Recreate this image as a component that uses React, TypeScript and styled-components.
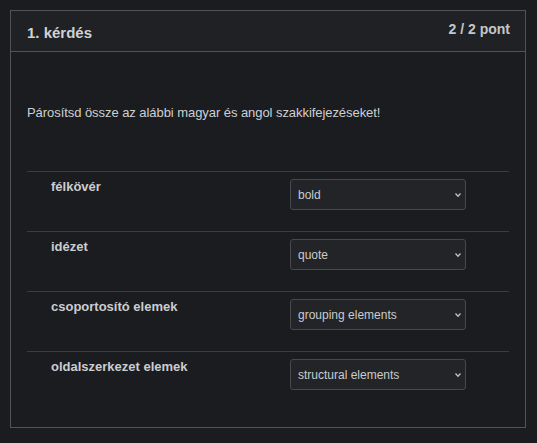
import React from "react";
import styled, { createGlobalStyle } from "styled-components";

const Global = createGlobalStyle`
  html, body { margin: 0; padding: 0; background: #1b1c1f; }
  body { font-family: "Liberation Sans", Arial, sans-serif; color: #cdcfd2; }
`;

const Page = styled.div`
  padding: 10px 11px 14px 10px;
`;

const Card = styled.section`
  border: 1px solid #515255;
  background: #1b1c1f;
`;

const Header = styled.header`
  display: flex;
  justify-content: space-between;
  align-items: flex-start;
  padding: 8px 15px 8px 16px;
  background: #202124;
  border-bottom: 1px solid #515255;
`;

const Title = styled.h2`
  margin: 4px 0 0;
  font-size: 15px;
  line-height: 20px;
  font-weight: 700;
  color: #cfd1d4;
`;

const Score = styled.div`
  font-size: 14px;
  line-height: 20px;
  font-weight: 700;
  color: #c4c6c9;
`;

const Body = styled.div`
  padding: 16px 16px 16px;
`;

const Prompt = styled.p`
  margin: 35px 0 48px;
  font-size: 13px;
  line-height: 20px;
  letter-spacing: -0.06px;
  color: #cdd0d3;
`;

const Row = styled.div`
  display: grid;
  grid-template-columns: 263px 176px;
  border-top: 1px solid #3b3c3f;
  padding: 7px 0 21px;
`;

const Label = styled.div`
  padding-left: 24px;
  font-size: 13px;
  line-height: 16px;
  font-weight: 700;
  color: #cbcdd0;
`;

const SelectWrap = styled.div`
  position: relative;
  width: 176px;
  height: 31px;
`;

const Select = styled.select`
  appearance: none;
  -webkit-appearance: none;
  width: 100%;
  height: 100%;
  box-sizing: border-box;
  margin: 0;
  padding: 0 20px 0 7px;
  background: #232427;
  border: 1px solid #47484b;
  border-radius: 3px;
  color: #c9cbce;
  font-family: "Liberation Sans", Arial, sans-serif;
  font-size: 12px;
  outline: none;
`;

const Chevron = styled.svg`
  position: absolute;
  right: 4px;
  top: 13px;
  pointer-events: none;
`;

const items: [string, string][] = [
  ["félkövér", "bold"],
  ["idézet", "quote"],
  ["csoportosító elemek", "grouping elements"],
  ["oldalszerkezet elemek", "structural elements"],
];

const options = ["bold", "quote", "grouping elements", "structural elements"];

export default function App() {
  return (
    <>
      <Global />
      <Page>
        <Card>
          <Header>
            <Title>1. kérdés</Title>
            <Score>2 / 2 pont</Score>
          </Header>
          <Body>
            <Prompt>Párosítsd össze az alábbi magyar és angol szakkifejezéseket!</Prompt>
            {items.map(([hu, en]) => (
              <Row key={hu}>
                <Label>{hu}</Label>
                <SelectWrap>
                  <Select defaultValue={en}>
                    {options.map((o) => (
                      <option key={o} value={o}>
                        {o}
                      </option>
                    ))}
                  </Select>
                  <Chevron width="8" height="6" viewBox="0 0 8 6">
                    <path d="M1.5 1.5 L4 4.2 L6.5 1.5" fill="none" stroke="#bfc1c4" strokeWidth="1.3" />
                  </Chevron>
                </SelectWrap>
              </Row>
            ))}
          </Body>
        </Card>
      </Page>
    </>
  );
}
